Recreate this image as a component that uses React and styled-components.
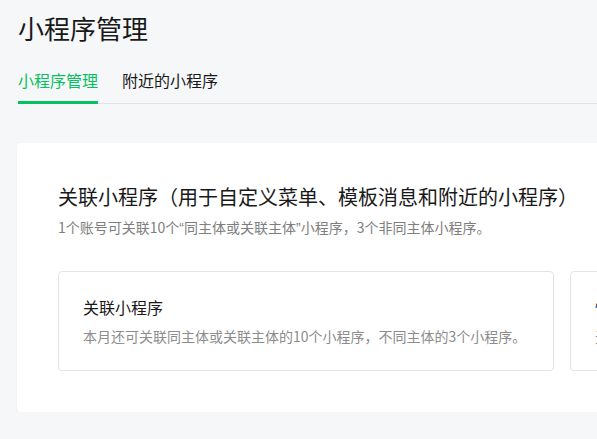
import React from "react";
import styled, { createGlobalStyle } from "styled-components";

const GlobalStyle = createGlobalStyle`
  html, body {
    margin: 0;
    padding: 0;
    background: #f6f7f9;
    overflow: hidden;
  }
  body {
    font-family: "Noto Sans CJK SC", "Noto Sans", sans-serif;
    color: #191919;
  }
`;

const Page = styled.div`
  padding: 8px 0 0 18px;
  width: 1200px;
`;

const PageTitle = styled.h1`
  margin: 0;
  font-size: 26px;
  font-weight: 400;
  line-height: 40px;
  color: #191919;
`;

const Tabs = styled.div`
  display: flex;
  gap: 24px;
  margin-top: 20px;
  border-bottom: 1px solid #e2e3e5;
`;

const Tab = styled.div`
  font-size: 16px;
  line-height: 24px;
  padding-bottom: 9px;
  margin-bottom: -1px;
  color: ${(p) => (p.$active ? "#07c160" : "#191919")};
  border-bottom: 3px solid ${(p) => (p.$active ? "#07c160" : "transparent")};
`;

const Panel = styled.section`
  margin: 39px 0 0 -1px;
  background: #fff;
  border-radius: 4px;
  box-shadow: 0 1px 3px rgba(0, 0, 0, 0.05);
  padding: 40px 40px 41px 41px;
`;

const PanelTitle = styled.h2`
  margin: 0;
  font-size: 20px;
  font-weight: 400;
  line-height: 28px;
  color: #191919;
`;

const PanelDesc = styled.p`
  margin: 6px 0 0;
  font-size: 14px;
  line-height: 20px;
  color: #7e7e7e;
`;

const Quote = styled.span`
  font-family: "Liberation Sans", sans-serif;
`;

const CardRow = styled.div`
  display: flex;
  gap: 16px;
  margin-top: 33px;
`;

const Card = styled.div`
  flex: 0 0 auto;
  box-sizing: border-box;
  width: 496px;
  height: 100px;
  border: 1px solid #e4e4e4;
  border-radius: 4px;
  padding: 23px 24px;
`;

const CardTitle = styled.div`
  font-size: 16px;
  line-height: 24px;
  color: #191919;
`;

const CardDesc = styled.div`
  margin-top: 7px;
  font-size: 14px;
  line-height: 20px;
  color: #8c8c8c;
`;

export default function App() {
  return (
    <>
      <GlobalStyle />
      <Page>
        <PageTitle>小程序管理</PageTitle>
        <Tabs>
          <Tab $active>小程序管理</Tab>
          <Tab>附近的小程序</Tab>
        </Tabs>
        <Panel>
          <PanelTitle>关联小程序（用于自定义菜单、模板消息和附近的小程序）</PanelTitle>
          <PanelDesc>
            1个账号可关联10个<Quote>“</Quote>同主体或关联主体<Quote>”</Quote>小程序，3个非同主体小程序。
          </PanelDesc>
          <CardRow>
            <Card>
              <CardTitle>关联小程序</CardTitle>
              <CardDesc>本月还可关联同主体或关联主体的10个小程序，不同主体的3个小程序。</CardDesc>
            </Card>
            <Card>
              <CardTitle>快速注册并认证小程序</CardTitle>
              <CardDesc>无需重复认证，复用公众号资质快速注册小程序。</CardDesc>
            </Card>
          </CardRow>
        </Panel>
      </Page>
    </>
  );
}
